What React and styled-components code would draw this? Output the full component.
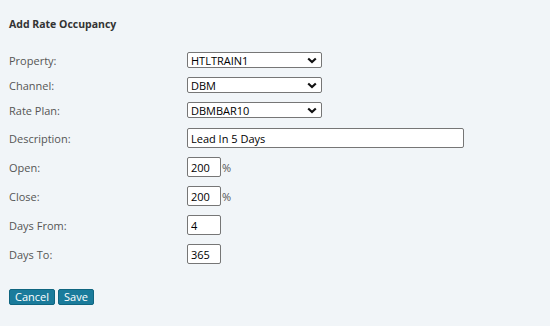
import styled, { createGlobalStyle } from "styled-components"

const GlobalStyle = createGlobalStyle`
  html, body {
    margin: 0;
    background: #f1f5f8;
    font-family: "Open Sans", "Liberation Sans", sans-serif;
  }
`

const selects = [
  { label: "Property:", value: "HTLTRAIN1" },
  { label: "Channel:", value: "DBM" },
  { label: "Rate Plan:", value: "DBMBAR10" },
]

const numbers = [
  { label: "Open:", value: "200", unit: "%" },
  { label: "Close:", value: "200", unit: "%" },
  { label: "Days From:", value: "4" },
  { label: "Days To:", value: "365" },
]

const Chevron = () => (
  <svg width="10" height="7" viewBox="0 0 10 7">
    <path d="M1.2 1.5 L5 5 L8.8 1.5" fill="none" stroke="#111" strokeWidth="2.2" />
  </svg>
)

const App = () => {
  return (
    <Page>
      <GlobalStyle />
      <Title>Add Rate Occupancy</Title>
      <Form>
        {selects.map((s, i) => (
          <Row key={i}>
            <Label>{s.label}</Label>
            <Select>
              <span>{s.value}</span>
              <Chevron />
            </Select>
          </Row>
        ))}
        <Row $gapTop>
          <Label>Description:</Label>
          <TextBox $wide value="Lead In 5 Days" readOnly />
        </Row>
        {numbers.map((n, i) => (
          <Row key={i}>
            <Label>{n.label}</Label>
            <Field>
              <TextBox value={n.value} readOnly />
              {n.unit && <Unit>{n.unit}</Unit>}
            </Field>
          </Row>
        ))}
      </Form>
      <Buttons>
        <Button>Cancel</Button>
        <Button>Save</Button>
      </Buttons>
    </Page>
  )
}

const Page = styled.div`
  padding: 16px 9px 0;
`

const Title = styled.div`
  font-size: 10.5px;
  font-weight: 700;
  line-height: 16px;
  color: #333;
  margin-bottom: 20px;
`

const Form = styled.div`
  display: grid;
  row-gap: 9px;
`

const Row = styled.div`
  display: grid;
  grid-template-columns: 178px 1fr;
  align-items: center;
  margin-top: ${(p) => (p.$gapTop ? "1px" : "0")};
`

const Label = styled.div`
  font-size: 11px;
  color: #555;
`

const Select = styled.div`
  box-sizing: border-box;
  width: 135px;
  height: 16px;
  border: 1px solid #767676;
  border-radius: 2px;
  background: #fff;
  display: flex;
  align-items: center;
  justify-content: space-between;
  padding: 0 4px 0 3px;
  font-size: 11px;
  color: #000;
`

const Field = styled.div`
  display: flex;
  align-items: center;
`

const TextBox = styled.input`
  box-sizing: border-box;
  width: ${(p) => (p.$wide ? "277px" : "34px")};
  height: 20px;
  border: 1px solid #767676;
  border-radius: 2px;
  background: #fff;
  padding: 0 3px;
  font-family: inherit;
  font-size: 11px;
  color: #000;
  outline: none;
`

const Unit = styled.span`
  font-size: 11px;
  color: #555;
  margin-left: 1px;
`

const Buttons = styled.div`
  display: flex;
  gap: 3px;
  margin-top: 25px;
`

const Button = styled.button`
  height: 16px;
  padding: 0 5px;
  border: 1px solid #0f6580;
  border-radius: 2px;
  background: #1a7b9b;
  color: #fff;
  font-family: inherit;
  font-size: 11px;
  line-height: 14px;
`

export default App
